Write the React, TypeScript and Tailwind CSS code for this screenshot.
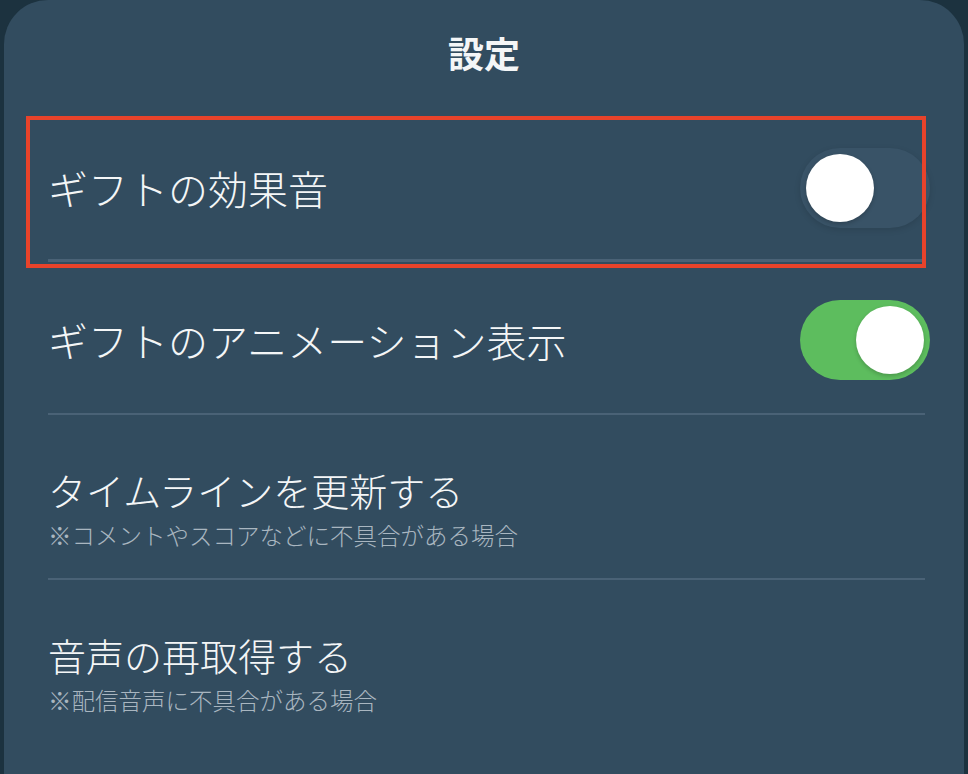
import { useState } from "react";

type ToggleProps = { on: boolean; onChange: () => void };

function Toggle({ on, onChange }: ToggleProps) {
  return (
    <button
      onClick={onChange}
      className={`relative w-[130px] h-[80px] rounded-full shrink-0 ${
        on ? "bg-[#5dbd5e]" : "bg-[#395367] shadow-[0_2px_6px_rgba(0,0,0,0.12)]"
      }`}
    >
      <span
        className={`absolute top-[6px] w-[68px] h-[68px] rounded-full bg-white shadow-[0_2px_4px_rgba(0,0,0,0.2)] ${
          on ? "left-[56px]" : "left-[6px]"
        }`}
      />
    </button>
  );
}

export default function App() {
  const [sound, setSound] = useState(false);
  const [anim, setAnim] = useState(true);

  return (
    <div
      className="w-[968px] h-[774px] bg-[#1c323f] overflow-hidden"
      style={{ fontFamily: '"Noto Sans CJK JP", "Noto Sans", sans-serif' }}
    >
      <div className="relative mx-[4px] h-full rounded-t-[44px] bg-[#324c5f] text-[#f4f6f7]">
        <div className="h-[116px] pb-[12px] flex items-center justify-center">
          <h1 className="text-[36px] font-bold leading-none">設定</h1>
        </div>

        <div className="pl-[44px] pr-[34px] font-light">
          {/* gift sound */}
          <div className="h-[143px] flex items-center justify-between pt-[1px]">
            <span className="text-[40px] leading-none">ギフトの効果音</span>
            <Toggle on={sound} onChange={() => setSound(!sound)} />
          </div>
          <div className="h-[3px] bg-[#4a6276] mr-[8px]" />

          {/* gift animation */}
          <div className="h-[151px] flex items-center justify-between pt-[4px]">
            <span className="text-[40px] leading-none">ギフトのアニメーション表示</span>
            <Toggle on={anim} onChange={() => setAnim(!anim)} />
          </div>
          <div className="h-[2px] bg-[#4a6276] mr-[5px]" />

          <div className="h-[163px] pt-[52px]">
            <div className="text-[38px] leading-[46px]">タイムラインを更新する</div>
            <div className="text-[23.5px] leading-[45px] text-[#a9b6c0]">
              ※コメントやスコアなどに不具合がある場合
            </div>
          </div>
          <div className="h-[2px] bg-[#4a6276] mr-[5px]" />

          <div className="pt-[52px]">
            <div className="text-[38px] leading-[46px]">音声の再取得する</div>
            <div className="text-[23.5px] leading-[45px] text-[#a9b6c0]">
              ※配信音声に不具合がある場合
            </div>
          </div>
        </div>

        {/* highlight box */}
        <div className="absolute left-[22px] top-[116px] w-[900px] h-[152px] border-4 border-[#e8432b] pointer-events-none" />
      </div>
    </div>
  );
}
